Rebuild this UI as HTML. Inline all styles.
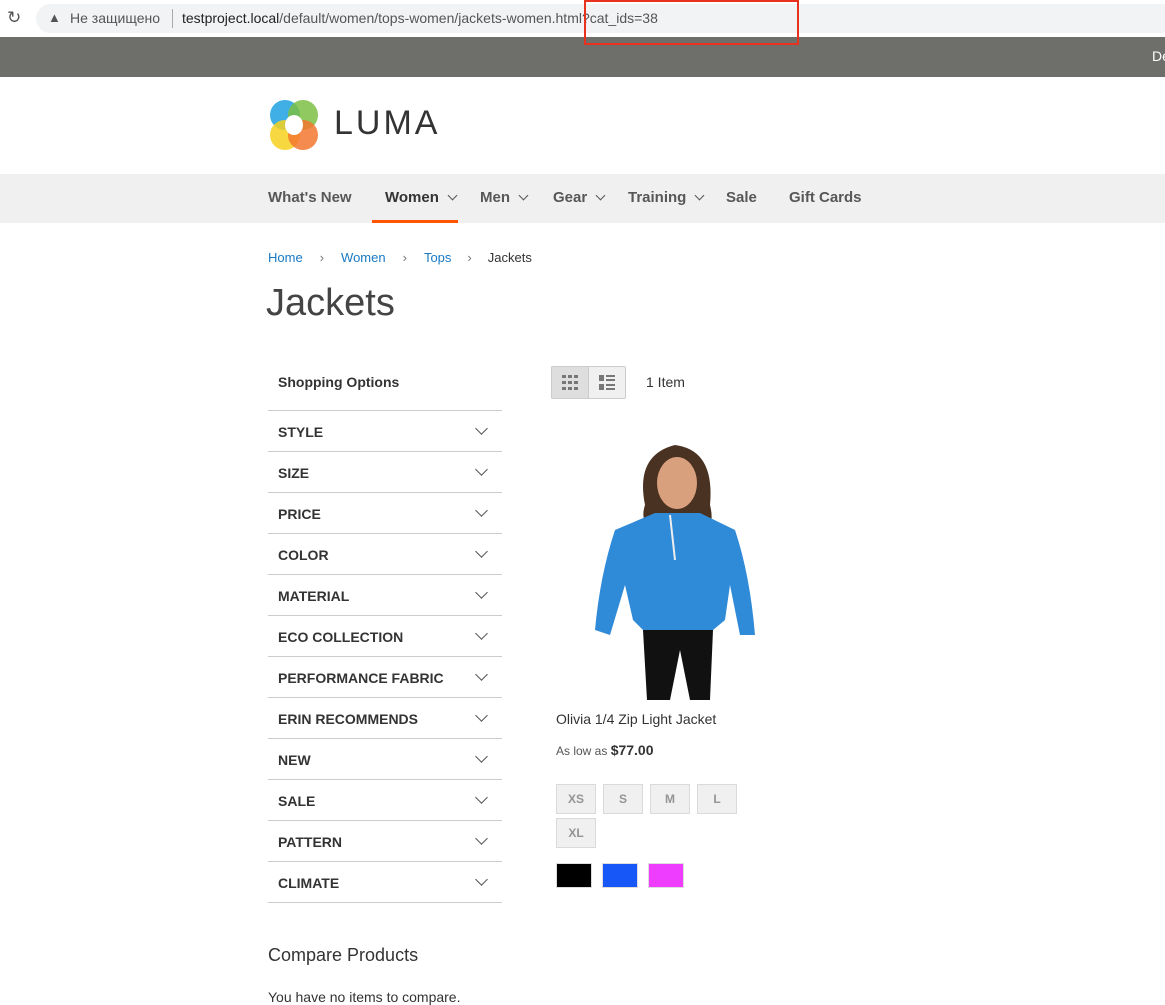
<!DOCTYPE html>
<html><head><meta charset="utf-8"><style>
*{margin:0;padding:0;box-sizing:border-box}
body{width:1165px;height:1005px;overflow:hidden;background:#fff;font-family:"Liberation Sans","Noto Sans CJK SC",sans-serif;color:#333;position:relative}
.abs{position:absolute}
.nav a{position:absolute;top:189px;font-size:15px;font-weight:bold;color:#575757;white-space:nowrap}
.chev{display:inline-block;width:7px;height:7px;border-right:1.5px solid #555;border-bottom:1.5px solid #555;transform:rotate(45deg);margin-left:10px;position:relative;top:-3px}
.f{position:absolute;left:268px;width:234px;height:41px;border-top:1px solid #ccc;font-size:14px;font-weight:bold;color:#333;padding:13px 10px}
.f i{position:absolute;right:16px;top:13px;width:9px;height:9px;border-right:1.5px solid #555;border-bottom:1.5px solid #555;transform:rotate(45deg)}
.sz{position:absolute;width:40px;height:30px;background:#f0f0f0;border:1px solid #dadada;font-size:12px;font-weight:bold;color:#949494;text-align:center;line-height:28px}
.sw{position:absolute;top:863px;width:36px;height:25px;border:1px solid #ddd}
</style></head><body>
<div class="abs" style="left:0;top:0;width:1165px;height:37px;background:#fff"></div>
<div class="abs" style="left:36px;top:4px;width:1140px;height:29px;background:#f1f3f4;border-radius:15px"></div>
<div class="abs" style="left:7px;top:8px;font-size:17px;color:#555">&#8635;</div>
<div class="abs" style="left:48px;top:10px;font-size:13px;color:#555">&#9650;</div>
<div class="abs" style="left:70px;top:10px;font-size:14px;color:#555">Не защищено</div>
<div class="abs" style="left:172px;top:9px;width:1px;height:19px;background:#aaa"></div>
<div class="abs" style="left:182px;top:10px;font-size:14px;color:#555;white-space:nowrap"><span style="color:#222">testproject.local</span>/default/women/tops-women/jackets-women.html?cat_ids=38</div>
<div class="abs" style="left:0;top:37px;width:1165px;height:40px;background:#6e6f6b"></div>
<div class="abs" style="left:1152px;top:48px;color:#fff;font-size:14px">De</div>
<div class="abs" style="left:584px;top:0;width:215px;height:45px;border:2px solid #e8321f"></div>
<svg class="abs" style="left:268px;top:99px" width="52" height="52" viewBox="0 0 52 52">
<circle cx="17" cy="16" r="15" fill="#1fa1e0" opacity=".85"/><circle cx="35" cy="16" r="15" fill="#7bc043" opacity=".85"/><circle cx="17" cy="36" r="15" fill="#f7d11e" opacity=".85"/><circle cx="35" cy="36" r="15" fill="#f3772f" opacity=".85"/><ellipse cx="26" cy="26" rx="9" ry="10" fill="#fff"/></svg>
<div class="abs" style="left:334px;top:104px;font-size:34px;letter-spacing:3px;color:#333">LUMA</div>
<div class="abs" style="left:0;top:174px;width:1165px;height:49px;background:#f0f0f0"></div>
<div class="nav">
<a style="left:268px">What's New</a>
<a style="left:385px;color:#333">Women<span class="chev"></span></a>
<a style="left:480px">Men<span class="chev"></span></a>
<a style="left:553px">Gear<span class="chev"></span></a>
<a style="left:628px">Training<span class="chev"></span></a>
<a style="left:726px">Sale</a>
<a style="left:789px">Gift Cards</a>
</div>
<div class="abs" style="left:372px;top:220px;width:86px;height:3px;background:#ff5501"></div>
<div class="abs" style="left:268px;top:250px;font-size:13px;color:#333;white-space:nowrap"><span style="color:#1979c3">Home</span><span style="margin:0 17px;color:#777">&#8250;</span><span style="color:#1979c3">Women</span><span style="margin:0 17px;color:#777">&#8250;</span><span style="color:#1979c3">Tops</span><span style="margin:0 16px;color:#777">&#8250;</span>Jackets</div>
<div class="abs" style="left:266px;top:282px;font-size:38px;font-weight:300;color:#444">Jackets</div>
<div class="abs" style="left:278px;top:374px;font-size:14px;font-weight:bold">Shopping Options</div>
<div class="f" style="top:410px">STYLE<i></i></div>
<div class="f" style="top:451px">SIZE<i></i></div>
<div class="f" style="top:492px">PRICE<i></i></div>
<div class="f" style="top:533px">COLOR<i></i></div>
<div class="f" style="top:574px">MATERIAL<i></i></div>
<div class="f" style="top:615px">ECO COLLECTION<i></i></div>
<div class="f" style="top:656px">PERFORMANCE FABRIC<i></i></div>
<div class="f" style="top:697px">ERIN RECOMMENDS<i></i></div>
<div class="f" style="top:738px">NEW<i></i></div>
<div class="f" style="top:779px">SALE<i></i></div>
<div class="f" style="top:820px">PATTERN<i></i></div>
<div class="f" style="top:861px">CLIMATE<i></i></div>
<div class="abs" style="left:268px;top:902px;width:234px;height:1px;background:#ccc"></div>
<div class="abs" style="left:268px;top:945px;font-size:18px;font-weight:300">Compare Products</div>
<div class="abs" style="left:268px;top:989px;font-size:14px">You have no items to compare.</div>
<div class="abs" style="left:551px;top:366px;width:75px;height:33px;border:1px solid #ccc;border-radius:2px;background:#f0f0f0"></div>
<div class="abs" style="left:551px;top:366px;width:38px;height:33px;background:#dedede;border:1px solid #ccc;border-radius:2px"></div>
<svg class="abs" style="left:562px;top:375px" width="16" height="15"><g fill="#777"><rect x="0" y="0" width="4" height="3"/><rect x="6" y="0" width="4" height="3"/><rect x="12" y="0" width="4" height="3"/><rect x="0" y="6" width="4" height="3"/><rect x="6" y="6" width="4" height="3"/><rect x="12" y="6" width="4" height="3"/><rect x="0" y="12" width="4" height="3"/><rect x="6" y="12" width="4" height="3"/><rect x="12" y="12" width="4" height="3"/></g></svg>
<svg class="abs" style="left:599px;top:375px" width="16" height="15"><g fill="#777"><rect x="0" y="0" width="5" height="6"/><rect x="7" y="0" width="9" height="2"/><rect x="7" y="4" width="9" height="2"/><rect x="0" y="9" width="5" height="6"/><rect x="7" y="9" width="9" height="2"/><rect x="7" y="13" width="9" height="2"/></g></svg>
<div class="abs" style="left:646px;top:374px;font-size:14px">1 Item</div>
<svg class="abs" style="left:585px;top:435px" width="180" height="267" viewBox="0 0 180 267">
<path d="M60 70 Q50 20 90 10 Q130 15 125 70 Q130 90 120 95 L65 95 Q55 85 60 70Z" fill="#4a3222"/>
<ellipse cx="92" cy="48" rx="20" ry="26" fill="#d9a07e"/>
<path d="M70 78 L115 78 L150 95 Q165 140 170 200 L155 200 L145 150 L140 185 L128 195 L58 195 L48 185 L40 150 L25 200 L10 195 Q15 140 30 95Z" fill="#2f8ad8"/>
<path d="M58 195 L128 195 L125 265 L105 265 L95 215 L85 265 L62 265Z" fill="#111"/>
<path d="M85 80 L90 125" stroke="#eee" stroke-width="2"/>
</svg>
<div class="abs" style="left:556px;top:711px;font-size:14px">Olivia 1/4 Zip Light Jacket</div>
<div class="abs" style="left:556px;top:742px;font-size:12px;color:#555">As low as <b style="font-size:14px;color:#333">$77.00</b></div>
<div class="sz" style="left:556px;top:784px">XS</div>
<div class="sz" style="left:603px;top:784px">S</div>
<div class="sz" style="left:650px;top:784px">M</div>
<div class="sz" style="left:697px;top:784px">L</div>
<div class="sz" style="left:556px;top:818px">XL</div>
<div class="sw" style="left:556px;background:#000"></div>
<div class="sw" style="left:602px;background:#1857f7"></div>
<div class="sw" style="left:648px;background:#ef3dff"></div>
</body></html>
